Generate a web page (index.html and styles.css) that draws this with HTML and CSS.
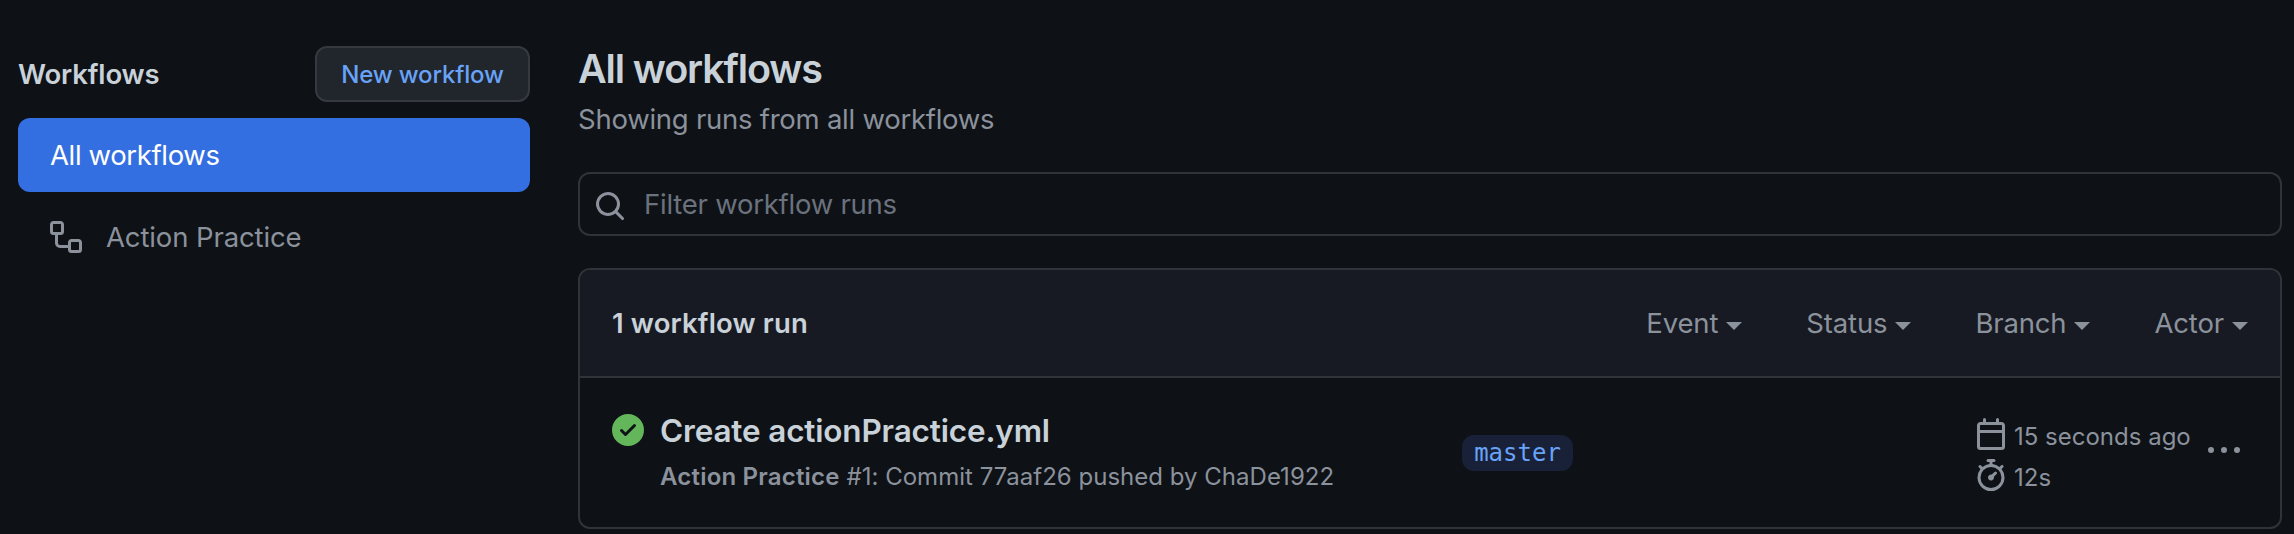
FILE: index.html
```
<!DOCTYPE html>
<html lang="en">
<head>
<meta charset="utf-8">
<title>Workflow runs</title>
<link rel="stylesheet" href="styles.css">
</head>
<body>
<div class="page">
  <aside class="sidebar">
    <div class="sidebar-head">
      <h2 class="sidebar-title">Workflows</h2>
      <button class="new-button">New workflow</button>
    </div>
    <a class="nav-item nav-active">All workflows</a>
    <a class="nav-item nav-sub">
      <svg class="icon" viewBox="0 0 16 16"><path fill-rule="evenodd" d="M0 1.75C0 .784.784 0 1.75 0h3.5C6.216 0 7 .784 7 1.75v3.5A1.75 1.75 0 015.25 7H4v4a1 1 0 001 1h4v-1.25C9 9.784 9.784 9 10.75 9h3.5c.966 0 1.75.784 1.75 1.75v3.5A1.75 1.75 0 0114.25 16h-3.5A1.75 1.75 0 019 14.25v-.75H5A2.5 2.5 0 012.5 11V7h-.75A1.75 1.75 0 010 5.25v-3.5zm1.75-.25a.25.25 0 00-.25.25v3.5c0 .138.112.25.25.25h3.5a.25.25 0 00.25-.25v-3.5a.25.25 0 00-.25-.25h-3.5zm9 9a.25.25 0 00-.25.25v3.5c0 .138.112.25.25.25h3.5a.25.25 0 00.25-.25v-3.5a.25.25 0 00-.25-.25h-3.5z"/></svg>
      <span>Action Practice</span>
    </a>
  </aside>
  <main class="main">
    <h1 class="title">All workflows</h1>
    <p class="subtitle">Showing runs from all workflows</p>
    <div class="search">
      <svg class="icon" viewBox="0 0 16 16"><path fill-rule="evenodd" d="M11.5 7a4.499 4.499 0 11-8.998 0A4.499 4.499 0 0111.5 7zm-.82 4.74a6 6 0 111.06-1.06l3.04 3.04a.75.75 0 11-1.06 1.06l-3.04-3.04z"/></svg>
      <span class="placeholder">Filter workflow runs</span>
    </div>
    <section class="box">
      <header class="box-head">
        <strong class="count">1 workflow run</strong>
        <nav class="filters">
          <span class="filter">Event<i class="caret"></i></span>
          <span class="filter">Status<i class="caret"></i></span>
          <span class="filter">Branch<i class="caret"></i></span>
          <span class="filter">Actor<i class="caret"></i></span>
        </nav>
      </header>
      <div class="run">
        <svg class="icon status" viewBox="0 0 16 16"><path fill-rule="evenodd" d="M8 16A8 8 0 108 0a8 8 0 000 16zm3.78-9.72a.75.75 0 00-1.06-1.06L6.75 9.19 5.28 7.72a.75.75 0 00-1.06 1.06l2 2a.75.75 0 001.06 0l4.5-4.5z"/></svg>
        <div class="run-text">
          <a class="run-title">Create actionPractice.yml</a>
          <div class="run-desc"><b>Action Practice</b> #1: Commit 77aaf26 pushed by ChaDe1922</div>
        </div>
        <div class="branch-col"><a class="branch">master</a></div>
        <div class="meta">
          <div class="meta-row"><svg class="icon" viewBox="0 0 16 16"><path fill-rule="evenodd" d="M4.75 0a.75.75 0 01.75.75V2h5V.75a.75.75 0 011.5 0V2h1.25c.966 0 1.75.784 1.75 1.75v10.5A1.75 1.75 0 0113.25 16H2.75A1.75 1.75 0 011 14.25V3.75C1 2.784 1.784 2 2.75 2H4V.75A.75.75 0 014.75 0zm0 3.5h8.5a.25.25 0 01.25.25V6h-11V3.75a.25.25 0 01.25-.25h2zm-2.25 4v6.75c0 .138.112.25.25.25h10.5a.25.25 0 00.25-.25V7.5h-11z"/></svg><span>15 seconds ago</span></div>
          <div class="meta-row"><svg class="icon" viewBox="0 0 16 16"><path fill-rule="evenodd" d="M5.75.75A.75.75 0 016.5 0h3a.75.75 0 010 1.5h-.75v1l-.001.041a6.718 6.718 0 013.464 1.435l.007-.006.75-.75a.75.75 0 111.06 1.06l-.75.75-.006.007a6.75 6.75 0 11-10.548 0L2.72 5.03l-.75-.75a.75.75 0 011.06-1.06l.75.75.007.006A6.718 6.718 0 017.25 2.541a.756.756 0 010-.041v-1H6.5a.75.75 0 01-.75-.75zM8 14.5A5.25 5.25 0 108 4a5.25 5.25 0 000 10.5zm.389-6.7l1.33-1.33a.75.75 0 111.061 1.06L9.45 8.861A1.502 1.502 0 018 10.75a1.5 1.5 0 11.389-2.95z"/></svg><span>12s</span></div>
        </div>
        <svg class="icon more" viewBox="0 0 16 16"><path d="M8 9a1.5 1.5 0 100-3 1.5 1.5 0 000 3zM1.5 9a1.5 1.5 0 100-3 1.5 1.5 0 000 3zm13 0a1.5 1.5 0 100-3 1.5 1.5 0 000 3z"/></svg>
      </div>
    </section>
  </main>
</div>
</body>
</html>
```

FILE: styles.css
```
* { box-sizing: border-box; }
body { margin: 0; background: #0e1116; color: #8b929c; font: 27.5px/40px Inter, "Liberation Sans", sans-serif; white-space: nowrap; }
h1, h2, p { margin: 0; }
.icon { width: 32px; height: 32px; fill: currentColor; flex: none; display: block; }
.page { display: flex; gap: 48px; height: 534px; padding: 46px 12px 0 18px; overflow: hidden; }
.sidebar { width: 512px; flex: none; }
.sidebar-head { display: flex; justify-content: space-between; align-items: center; margin-bottom: 16px; }
.sidebar-title { font-size: 27.5px; font-weight: 600; letter-spacing: -0.15px; color: #c9d1d9; }
.new-button { width: 215px; height: 56px; border: 2px solid #363a40; border-radius: 12px; background: #21252c; color: #68a3f8; font: 500 24px/40px Inter, sans-serif; letter-spacing: -0.15px; padding: 1px 0 0; }
.nav-item { display: flex; align-items: center; height: 74px; padding: 0 32px; border-radius: 12px; letter-spacing: -0.12px; }
.nav-active { background: #346fe2; color: #fff; letter-spacing: -0.36px; }
.nav-sub { margin-top: 8px; gap: 24px; }
.main { flex: 1; min-width: 0; }
.title { font-size: 39.5px; line-height: 46px; font-weight: 600; letter-spacing: -1.15px; color: #c9d1d9; }
.subtitle { margin-top: 7px; letter-spacing: -0.25px; }
.search { display: flex; align-items: center; gap: 18px; height: 64px; margin-top: 33px; padding-left: 14px; border: 2px solid #30343a; border-radius: 12px; }
.search .icon { margin-top: 4px; }
.placeholder { color: #6b727d; letter-spacing: -0.24px; }
.box { margin-top: 32px; height: 261px; border: 2px solid #30343a; border-radius: 12px; overflow: hidden; }
.box-head { display: flex; align-items: center; justify-content: space-between; height: 108px; padding: 0 32px; background: #171a22; border-bottom: 2px solid #30343a; }
.count { font-weight: 600; letter-spacing: 0.15px; color: #c9d1d9; }
.filters { display: flex; gap: 64px; }
.filter { display: flex; align-items: center; gap: 8px; letter-spacing: -0.15px; }
.caret { border: 8px solid transparent; border-top-color: currentColor; border-bottom: 0; margin-top: 6px; }
.run { display: flex; height: 149px; padding: 0 40px 0 32px; }
.status { color: #63b659; margin-top: 36px; }
.run-text { width: 802px; margin-left: 16px; padding-top: 29px; }
.run-title { display: block; font-size: 31.5px; line-height: 48px; font-weight: 600; letter-spacing: -0.17px; color: #c9d1d9; }
.run-desc { font-size: 24px; line-height: 44px; letter-spacing: 0.02px; }
.run-desc b { font-weight: 600; letter-spacing: 0.2px; }
.branch-col { width: 513px; padding-top: 57px; }
.branch { display: flex; justify-content: center; width: 111px; height: 36px; border-radius: 12px; background: #182138; color: #68a3f8; font: 24px/36px "DejaVu Sans Mono", monospace; }
.meta { width: 233px; padding-top: 40px; font-size: 24px; }
.meta-row { display: flex; align-items: flex-start; gap: 7px; height: 41px; line-height: 37px; }
.more { margin-top: 57px; }
```
